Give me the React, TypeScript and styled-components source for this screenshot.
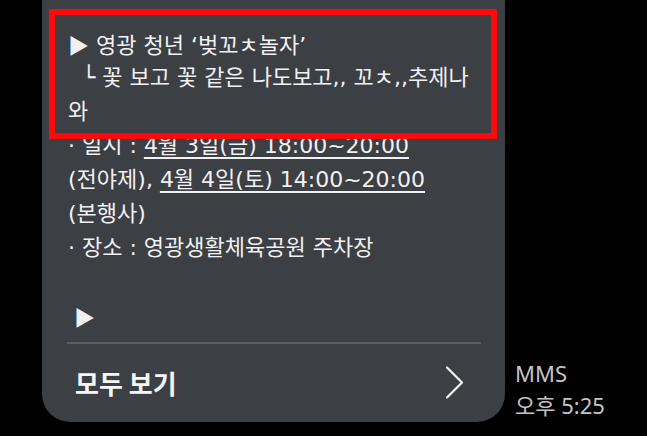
import React from 'react';
import styled, { createGlobalStyle } from 'styled-components';

const GlobalStyle = createGlobalStyle`
  html, body {
    margin: 0;
    padding: 0;
    background: #000000;
  }
  body {
    font-family: "Noto Sans CJK KR", "Noto Sans", sans-serif;
    overflow: hidden;
  }
`;

const Screen = styled.div`
  width: 647px;
  height: 436px;
  display: flex;
  align-items: flex-end;
  padding: 0 0 14px 42px;
  box-sizing: border-box;
  background: #000000;
`;

const Bubble = styled.div`
  width: 463px;
  height: 422px;
  align-self: flex-start;
  background: #3c3f43;
  border-radius: 0 0 28px 28px;
  display: flex;
  flex-direction: column;
`;

const Body = styled.div`
  padding: 27px 24px 0 26px;
  color: #f1f1f3;
  font-family: "DejaVu Sans", "Noto Sans CJK KR", sans-serif;
  font-size: 22px;
  line-height: 34px;
`;

const Highlight = styled.div`
  position: relative;

  &::after {
    content: '';
    position: absolute;
    top: -18px;
    bottom: -10px;
    left: -19px;
    right: -16px;
    border: 6px solid #ff0a0a;
    pointer-events: none;
  }
`;

const Line = styled.div<{ $indent?: number }>`
  white-space: nowrap;
  padding-left: ${(p) => p.$indent || 0}px;
  height: 34px;
`;

const Date = styled.span`
  text-decoration: underline;
  text-decoration-thickness: 2px;
  text-underline-offset: 4px;
`;

const Arrow = styled.span<{ $nudge?: number }>`
  display: inline-block;
  margin-left: ${(p) => p.$nudge || 0}px;
  font-family: "Noto Sans CJK KR", sans-serif;
  font-size: 21px;
`;

const Divider = styled.div`
  height: 2px;
  background: #5b5e62;
  margin: 9px 24px 0 25px;
`;

const FooterRow = styled.div`
  flex: 1;
  display: flex;
  align-items: center;
  justify-content: space-between;
  padding: 0 41px 2px 33px;
`;

const ViewAll = styled.span`
  color: #f6f6f8;
  font-size: 26px;
  font-weight: 700;
`;

const Meta = styled.div`
  margin-left: 10px;
  margin-bottom: 1px;
  color: #c4c4c6;
  font-family: "Noto Sans", "Noto Sans CJK KR", sans-serif;
  font-size: 22px;
  line-height: 32px;
`;

const Chevron = () => (
  <svg width="19" height="33" viewBox="0 0 19 33" fill="none">
    <polyline
      points="2,1.5 17,16.5 2,31.5"
      stroke="#f2f2f2"
      strokeWidth="2.2"
      strokeLinecap="round"
      strokeLinejoin="round"
    />
  </svg>
);

const App = () => {
  return (
    <>
      <GlobalStyle />
      <Screen>
        <Bubble>
          <Body>
            <Highlight>
              <Line>
                <Arrow>▶</Arrow> 영광 청년 ‘벚꼬ㅊ놀자’
              </Line>
              <Line $indent={14}>└ 꽃 보고 꽃 같은 나도보고,, 꼬ㅊ,,추제나</Line>
              <Line>와</Line>
            </Highlight>
            <Line>
              · 일시 : <Date>4월 3일(금) 18:00~20:00</Date>
            </Line>
            <Line>
              (전야제), <Date>4월 4일(토) 14:00~20:00</Date>
            </Line>
            <Line>(본행사)</Line>
            <Line>· 장소 : 영광생활체육공원 주차장</Line>
            <Line />
            <Line>
              <Arrow $nudge={6}>▶</Arrow>
            </Line>
          </Body>
          <Divider />
          <FooterRow>
            <ViewAll>모두 보기</ViewAll>
            <Chevron />
          </FooterRow>
        </Bubble>
        <Meta>
          <div>MMS</div>
          <div>오후 5:25</div>
        </Meta>
      </Screen>
    </>
  );
};

export default App;
